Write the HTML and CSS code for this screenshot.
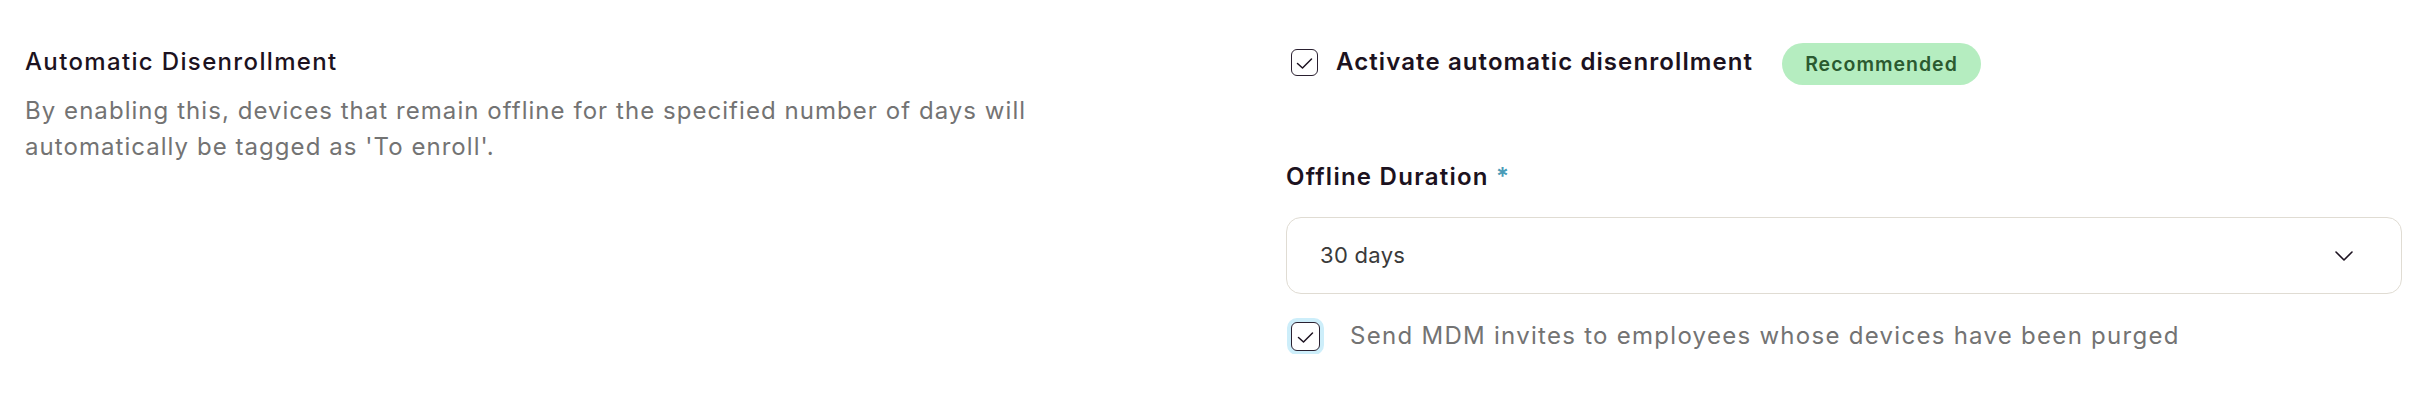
FILE: index.html
```html
<!DOCTYPE html>
<html lang="en">
<head>
<meta charset="utf-8">
<title>Automatic Disenrollment</title>
<link rel="stylesheet" href="styles.css">
</head>
<body>
<section class="setting">
  <div class="setting-info">
    <h2 class="setting-title">Automatic Disenrollment</h2>
    <p class="setting-desc">By enabling this, devices that remain offline for the specified number of days will automatically be tagged as 'To enroll'.</p>
  </div>
  <div class="setting-controls">
    <label class="toggle-row">
      <span class="checkbox">
        <svg viewBox="0 0 27 27" width="27" height="27"><path d="M6.5 14.5 L11.5 19 L20.5 10" fill="none" stroke="#1c1220" stroke-width="1.5" stroke-linecap="round" stroke-linejoin="round"/></svg>
      </span>
      <span class="toggle-label">Activate automatic disenrollment</span>
      <span class="badge">Recommended</span>
    </label>
    <div class="field">
      <div class="field-label">Offline Duration <span class="required">*</span></div>
      <div class="select">
        <span class="select-value">30 days</span>
        <svg class="chevron" viewBox="0 0 18 10" width="18" height="10"><path d="M1 1 L9 9 L17 1" fill="none" stroke="#1c1220" stroke-width="1.6" stroke-linecap="round" stroke-linejoin="round"/></svg>
      </div>
      <label class="invite-row">
        <span class="checkbox checkbox-focus">
          <svg viewBox="0 0 27 27" width="27" height="27"><path d="M6.5 14.5 L11.5 19 L20.5 10" fill="none" stroke="#1c1220" stroke-width="1.5" stroke-linecap="round" stroke-linejoin="round"/></svg>
        </span>
        <span class="invite-label">Send MDM invites to employees whose devices have been purged</span>
      </label>
    </div>
  </div>
</section>
</body>
</html>
```

FILE: styles.css
```css
* { box-sizing: border-box; }

html, body {
  margin: 0;
  padding: 0;
  background: #ffffff;
}

body {
  font-family: Inter, "Noto Sans", sans-serif;
  color: #1c1220;
  letter-spacing: 1.2px;
}

.setting {
  display: flex;
  padding: 39px 22px 0 25px;
}

.setting-info {
  flex: 1;
  padding-top: 5px;
  padding-right: 48px;
}

.setting-title {
  margin: 0;
  font-size: 24px;
  line-height: 36px;
  font-weight: 500;
  letter-spacing: 1.35px;
  color: #1c1220;
}

.setting-desc {
  margin: 13px 0 0;
  max-width: 1080px;
  font-size: 24px;
  line-height: 36px;
  letter-spacing: 1.05px;
  color: #737373;
}

.setting-controls {
  width: 1116px;
  display: flex;
  flex-direction: column;
}

.toggle-row {
  display: flex;
  align-items: center;
  padding-left: 5px;
}

.checkbox {
  width: 27px;
  height: 27px;
  flex: none;
  border: 1.5px solid #2a2030;
  border-radius: 6px;
  display: flex;
  align-items: center;
  justify-content: center;
  background: #ffffff;
}

.checkbox svg {
  display: block;
  flex: none;
}

.toggle-label {
  margin-left: 18px;
  font-size: 24px;
  line-height: 36px;
  font-weight: 600;
  letter-spacing: 1.1px;
  color: #1c1220;
}

.badge {
  margin-left: 29px;
  margin-top: 4px;
  height: 42px;
  padding: 0 23px;
  border-radius: 21px;
  background: #b5edc0;
  color: #2b5a30;
  font-size: 19.5px;
  font-weight: 600;
  letter-spacing: 1px;
  display: flex;
  align-items: center;
}

.field {
  margin-top: 74px;
  display: flex;
  flex-direction: column;
}

.field-label {
  font-size: 24px;
  line-height: 36px;
  font-weight: 600;
  letter-spacing: 1.25px;
  color: #1c1220;
}

.required {
  color: #4a9bb8;
}

.select {
  margin-top: 22px;
  height: 77px;
  border: 1.5px solid #e0dcd3;
  border-radius: 15px;
  display: flex;
  align-items: center;
  justify-content: space-between;
  padding: 0 48px 0 33px;
}

.select-value {
  font-size: 22px;
  line-height: 33px;
  letter-spacing: 0.3px;
  color: #3a3a3a;
}

.chevron {
  display: block;
}

.invite-row {
  margin-top: 24px;
  display: flex;
  align-items: center;
  padding-left: 5px;
}

.checkbox-focus {
  width: 29px;
  height: 29px;
  box-shadow: 0 0 0 4px #cdeefa;
}

.invite-label {
  margin-left: 30px;
  font-size: 24px;
  line-height: 36px;
  letter-spacing: 1.28px;
  color: #737373;
}
```
